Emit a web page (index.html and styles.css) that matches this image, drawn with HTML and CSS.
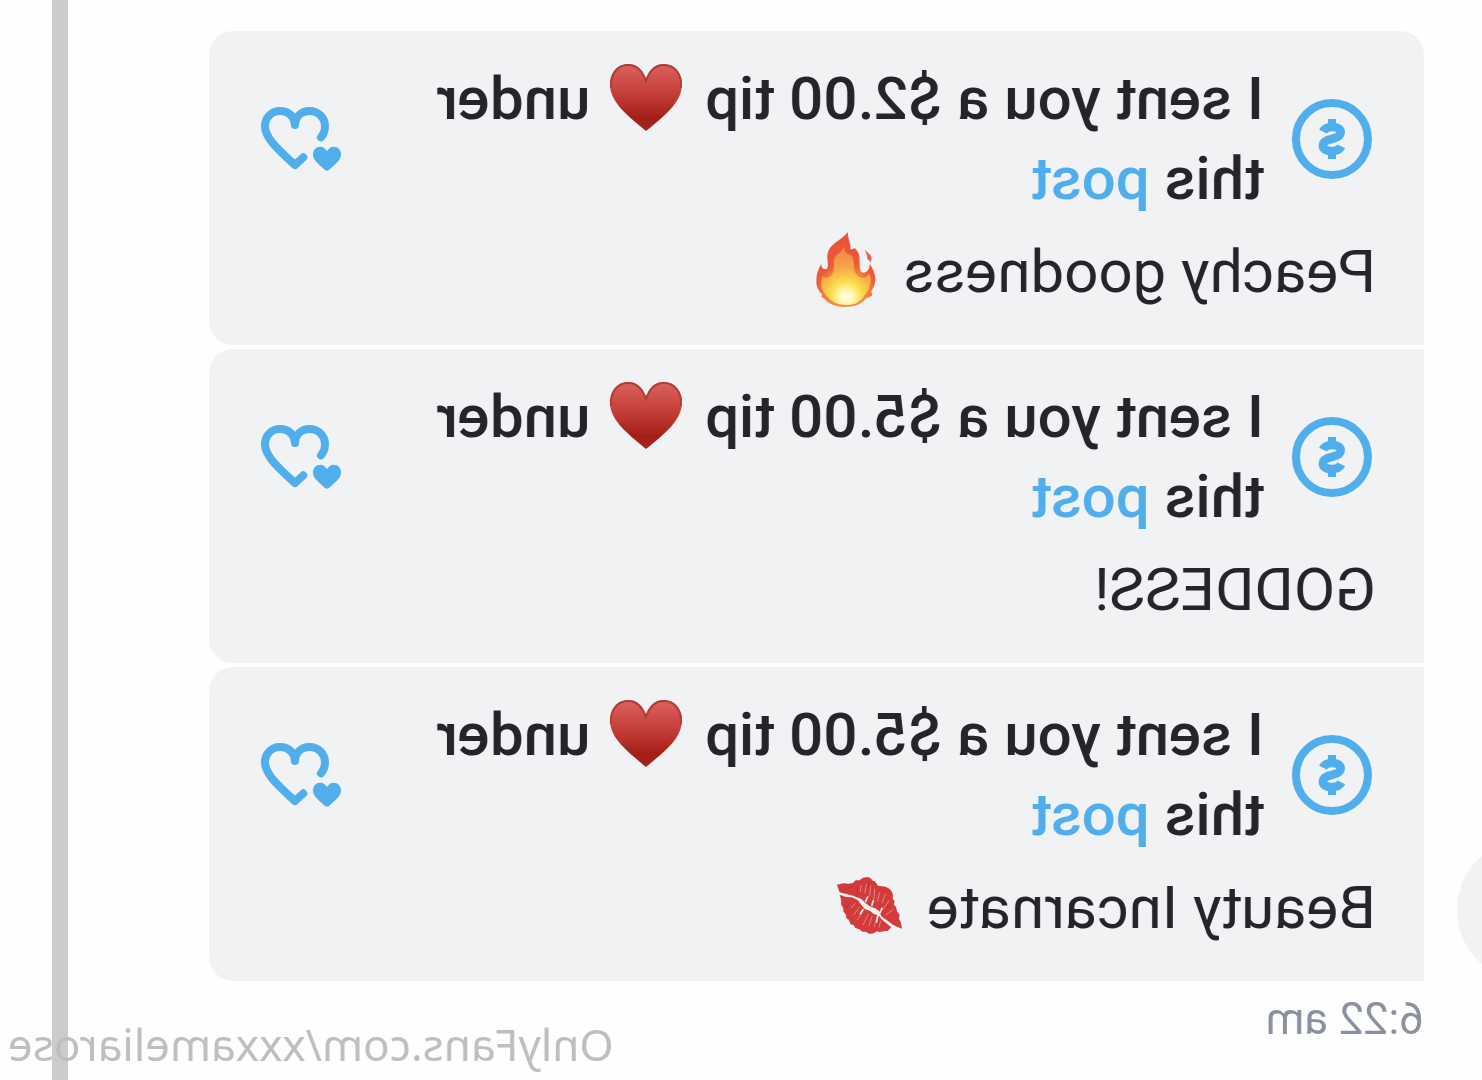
FILE: index.html
```
<!DOCTYPE html>
<html lang="en">
<head>
    <meta charset="UTF-8">
    <meta name="viewport" content="width=device-width, initial-scale=1.0">
    <title>Messages</title>
    <link rel="stylesheet" href="styles.css">
</head>
<body>
    <!-- Shared icons -->
    <svg class="sprite" aria-hidden="true">
        <defs>
            <linearGradient id="heart-fill" x1="0" y1="0" x2="0" y2="1">
                <stop offset="0" stop-color="#dc625f"/>
                <stop offset="0.5" stop-color="#c03a34"/>
                <stop offset="0.8" stop-color="#a41f17"/>
                <stop offset="1" stop-color="#a0261f"/>
            </linearGradient>
            <radialGradient id="flame-fill" gradientUnits="userSpaceOnUse" cx="88" cy="180" r="150">
                <stop offset="0" stop-color="#fbb040"/>
                <stop offset="0.45" stop-color="#f4803a"/>
                <stop offset="0.6" stop-color="#ec5a36"/>
                <stop offset="1" stop-color="#e8543a"/>
            </radialGradient>
            <radialGradient id="flame-core" gradientUnits="userSpaceOnUse" cx="88" cy="196" r="135">
                <stop offset="0" stop-color="#fffff0"/>
                <stop offset="0.14" stop-color="#fffab8"/>
                <stop offset="0.36" stop-color="#fbdc4c"/>
                <stop offset="0.65" stop-color="#f8a84a"/>
                <stop offset="1" stop-color="#f28a48"/>
            </radialGradient>
        </defs>
        <symbol id="icon-dollar" viewBox="0 0 240 240">
            <circle cx="120" cy="120" r="108" fill="none" stroke="currentColor" stroke-width="24"/>
            <path d="M147 98C142 88 132 84 119 84C104 84 94 90 94 100C94 113 106 117 120 120C135 123 147 127 147 140C147 151 136 156 121 156C108 156 97 152 92 142" fill="none" stroke="currentColor" stroke-width="26"/>
            <path d="M108 60h24v24h-24zM108 156h24v24h-24z" fill="currentColor"/>
        </symbol>
        <symbol id="icon-hearts" viewBox="0 0 240 240">
            <path d="M60 115C51 105 48 94 48 82C48 56 68 36 94 36C120 36 138 54 138 78C138 54 157 36 183 36C209 36 228 56 228 82C228 112 202 140 138 198L113 175" fill="none" stroke="currentColor" stroke-width="24" stroke-linecap="round" stroke-linejoin="round"/>
            <path d="M42 156C36 147 30 143 22 143C9 143 0 153 0 166C0 178 6 185 14 193L36 213Q42 218 48 213L70 193C78 185 84 178 84 166C84 153 75 143 62 143C54 143 48 147 42 156Z" fill="currentColor"/>
        </symbol>
        <symbol id="emoji-heart" viewBox="0 0 74 70">
            <path d="M37 18C33 6 27 2 19 2C9 2 1 11 1 22C1 39 15 51 37 69C59 51 73 39 73 22C73 11 65 2 55 2C47 2 41 6 37 18Z" fill="url(#heart-fill)"/>
            <path d="M2 26C1 11 9 3 19 3C27 3 33 7 37 19C41 7 47 3 55 3C65 3 73 11 72 26" fill="none" stroke="#b03c38" stroke-width="2"/>
        </symbol>
        <symbol id="emoji-fire" viewBox="0 0 178 225">
            <path d="M83 0C85 20 72 38 76 52C66 52 64 46 61 50C50 60 48 72 48 86C48 100 49 113 42 121C30 127 17 114 18 95C8 110 0 126 1 145C2 159 8 169 13 178L10 190Q20 197 28 199C42 216 62 225 90 225C120 225 142 214 154 200L164 193L160 188C171 178 178 164 178 147C178 127 172 110 163 95C163 107 158 112 148 112C138 104 148 84 144 64C138 34 104 27 83 0Z" fill="url(#flame-fill)"/>
            <path d="M31 52C31 65 23 70 26 79L15 91C12 85 11 78 14 71C20 63 28 61 31 52Z" fill="#ea6048"/>
            <path d="M93 42C96 62 82 67 76 68C66 75 65 92 65 110C63 128 46 140 34 137C24 134 20 128 18 123C10 152 18 172 32 188C46 212 65 219 89 219C116 219 134 208 146 193C162 176 168 158 160 132C151 142 136 138 129 124C120 106 130 92 122 76C115 64 101 60 93 42Z" fill="url(#flame-core)"/>
        </symbol>
        <symbol id="emoji-kiss" viewBox="0 0 195 171">
            <path d="M195 23L176 19L160 20L147 18L139 10L127 10L117 2L102 0L94 4L87 12L81 13L72 26L60 28L50 29L40 34L31 43L27 53L28 65L22 73L24 84L18 89L15 103L7 113L9 125L3 137L0 155L15 149L27 143L42 132L62 118L68 103L80 94L97 88L110 77L122 66L147 56L187 46Z" fill="#d23b39"/>
            <path d="M187 53L168 60L150 61L132 70L121 85L112 96L95 102L85 111L70 115L61 127L49 137L32 151L42 161L55 163L67 165L76 163L84 169L97 171L108 164L119 164L127 157L140 153L145 144L154 142L159 129L167 123L168 113L176 103L176 94L183 82L182 71Z" fill="#d23b39"/>
            <path d="M106 22L112 48M94 27L97 57M82 36L84 66M123 26L125 44M67 47L74 74M50 51L60 78M39 70L55 96M26 97L47 113M141 80L152 92M129 92L145 114M117 103L134 128M101 111L116 143M90 119L98 145M76 122L83 150M64 132L69 151" fill="none" stroke="#e58583" stroke-width="3" stroke-linecap="round"/>
            <path d="M103 60L109 73M86 71L90 85M117 98L125 110M71 109L76 135M60 94L66 108" fill="none" stroke="#f4eeee" stroke-width="5" stroke-linecap="round"/>
            <path d="M146 29L161 34M132 31L135 48M156 76L167 92M42 88L46 94M100 16L101 32" fill="none" stroke="#b92f31" stroke-width="3" stroke-linecap="round"/>
        </symbol>
    </svg>

    <div class="screen">
        <main class="chat">
            <div class="thread">
                <div class="avatar"></div>
                <div class="messages">
                    <article class="message">
                        <div class="tip">
                            <svg class="icon"><use href="#icon-dollar"/></svg>
                            <p class="tip-text">I sent you a $2.00 tip <svg class="emoji-heart" role="img" aria-label="heart"><use href="#emoji-heart"/></svg> under this <a href="#">post</a></p>
                            <svg class="icon"><use href="#icon-hearts"/></svg>
                        </div>
                        <p class="note">Peachy goodness <svg class="emoji-fire" role="img" aria-label="fire"><use href="#emoji-fire"/></svg></p>
                    </article>

                    <article class="message">
                        <div class="tip">
                            <svg class="icon"><use href="#icon-dollar"/></svg>
                            <p class="tip-text">I sent you a $5.00 tip <svg class="emoji-heart" role="img" aria-label="heart"><use href="#emoji-heart"/></svg> under this <a href="#">post</a></p>
                            <svg class="icon"><use href="#icon-hearts"/></svg>
                        </div>
                        <p class="note">GODDESS!</p>
                    </article>

                    <article class="message">
                        <div class="tip">
                            <svg class="icon"><use href="#icon-dollar"/></svg>
                            <p class="tip-text">I sent you a $5.00 tip <svg class="emoji-heart" role="img" aria-label="heart"><use href="#emoji-heart"/></svg> under this <a href="#">post</a></p>
                            <svg class="icon"><use href="#icon-hearts"/></svg>
                        </div>
                        <p class="note">Beauty Incarnate <svg class="emoji-kiss" role="img" aria-label="kiss"><use href="#emoji-kiss"/></svg></p>
                    </article>
                </div>
            </div>
            <time class="time">6:22 am</time>
        </main>
        <div class="divider"></div>
        <div class="watermark">OnlyFans.com/xxxameliarose</div>
    </div>
</body>
</html>
```
FILE: styles.css
```
* {
    box-sizing: border-box;
}

body {
    margin: 0;
    background: #fefefe;
    color: #242529;
    font-family: Roboto, "Liberation Sans", sans-serif;
}

.sprite {
    position: absolute;
    width: 0;
    height: 0;
}

/* The whole screen is flipped, like a front camera view */
.screen {
    position: relative;
    display: flex;
    min-height: 100vh;
    padding-right: 52px;
    overflow: hidden;
    transform: scaleX(-1);
}

.chat {
    flex: 1;
    padding-top: 31px;
}

.thread {
    display: flex;
    align-items: flex-end;
    gap: 33px;
    padding-right: 141px;
}

.avatar {
    flex: none;
    width: 142px;
    height: 142px;
    margin-left: -117px;
    border-radius: 50%;
    background: #f1f2f4;
}

.messages {
    flex: 1;
    display: flex;
    flex-direction: column;
    gap: 4px;
}

.message {
    padding: 28px 48px 33px;
    border-radius: 0 24px 24px 0;
    background: #f1f2f4;
}

.message:first-child {
    border-top-left-radius: 24px;
}

.tip {
    display: flex;
    align-items: center;
    gap: 28px;
    padding: 0 4px;
}

.tip-text {
    flex: 1;
    margin: 0;
    font-size: 60px;
    font-weight: 500;
    line-height: 80px;
}

.tip-text a {
    color: #4faeeb;
    text-decoration: none;
}

.icon {
    flex: none;
    width: 80px;
    height: 80px;
    color: #4faeeb;
}

.note {
    margin: 13px 0 0;
    font-size: 60px;
    line-height: 80px;
}

.emoji-heart {
    width: 74px;
    height: 70px;
    margin: 0 4px 0 7px;
    vertical-align: -13px;
}

.emoji-fire {
    width: 60px;
    height: 75px;
    margin-left: 13px;
    vertical-align: -15px;
}

.emoji-kiss {
    width: 65px;
    height: 57px;
    margin-left: 10px;
    vertical-align: -6px;
}

.time {
    display: block;
    padding: 12px 58px;
    color: #8a90a2;
    font-size: 44px;
    line-height: 52px;
}

.divider {
    width: 16px;
    background: #ccc;
}

.watermark {
    position: absolute;
    right: 8px;
    bottom: 6px;
    color: #bebebe;
    font-family: "Noto Sans", "Open Sans", sans-serif;
    font-size: 44px;
    line-height: 60px;
}
```
